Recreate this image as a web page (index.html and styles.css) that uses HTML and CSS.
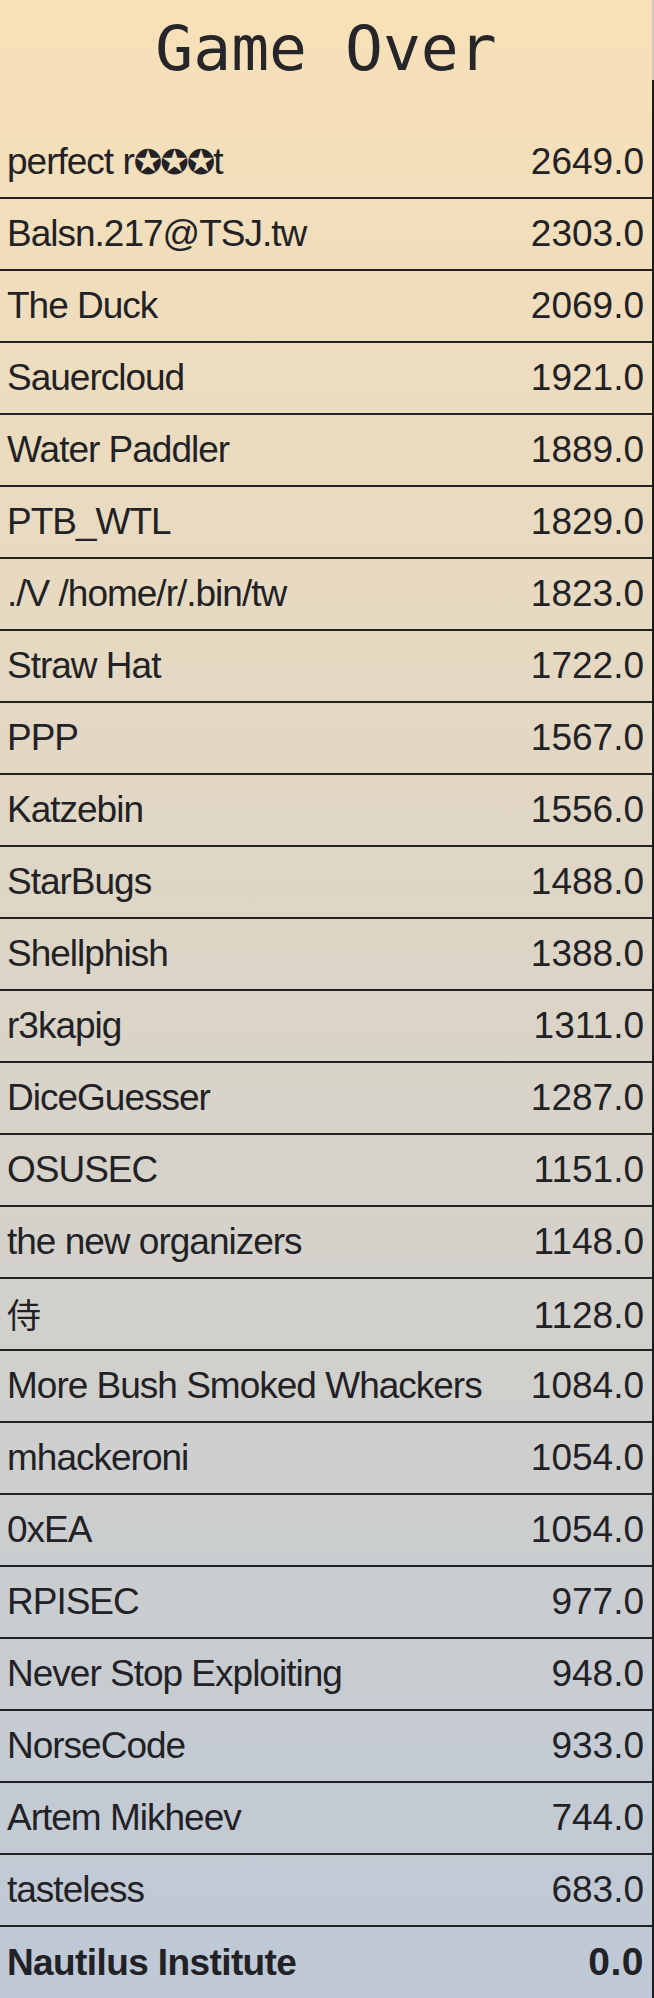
FILE: index.html
```html
<!DOCTYPE html>
<html lang="en">
<head>
<meta charset="utf-8">
<title>Game Over</title>
<link rel="stylesheet" href="styles.css">
</head>
<body>
<div class="board">
  <h1 class="title">Game Over</h1>
  <ol class="rows">
    <li class="row"><span class="name">perfect r<span class="star">✪✪✪</span>t</span><span class="score">2649.0</span></li>
    <li class="row"><span class="name">Balsn.217@TSJ.tw</span><span class="score">2303.0</span></li>
    <li class="row"><span class="name">The Duck</span><span class="score">2069.0</span></li>
    <li class="row"><span class="name">Sauercloud</span><span class="score">1921.0</span></li>
    <li class="row"><span class="name">Water Paddler</span><span class="score">1889.0</span></li>
    <li class="row"><span class="name">PTB_WTL</span><span class="score">1829.0</span></li>
    <li class="row"><span class="name">./V /home/r/.bin/tw</span><span class="score">1823.0</span></li>
    <li class="row"><span class="name">Straw Hat</span><span class="score">1722.0</span></li>
    <li class="row"><span class="name">PPP</span><span class="score">1567.0</span></li>
    <li class="row"><span class="name">Katzebin</span><span class="score">1556.0</span></li>
    <li class="row"><span class="name">StarBugs</span><span class="score">1488.0</span></li>
    <li class="row"><span class="name">Shellphish</span><span class="score">1388.0</span></li>
    <li class="row"><span class="name">r3kapig</span><span class="score">1311.0</span></li>
    <li class="row"><span class="name">DiceGuesser</span><span class="score">1287.0</span></li>
    <li class="row"><span class="name">OSUSEC</span><span class="score">1151.0</span></li>
    <li class="row"><span class="name">the new organizers</span><span class="score">1148.0</span></li>
    <li class="row"><span class="name cjk">侍</span><span class="score">1128.0</span></li>
    <li class="row"><span class="name">More Bush Smoked Whackers</span><span class="score">1084.0</span></li>
    <li class="row"><span class="name">mhackeroni</span><span class="score">1054.0</span></li>
    <li class="row"><span class="name">0xEA</span><span class="score">1054.0</span></li>
    <li class="row"><span class="name">RPISEC</span><span class="score">977.0</span></li>
    <li class="row"><span class="name">Never Stop Exploiting</span><span class="score">948.0</span></li>
    <li class="row"><span class="name">NorseCode</span><span class="score">933.0</span></li>
    <li class="row"><span class="name">Artem Mikheev</span><span class="score">744.0</span></li>
    <li class="row"><span class="name">tasteless</span><span class="score">683.0</span></li>
    <li class="row row-host"><span class="name">Nautilus Institute</span><span class="score">0.0</span></li>
  </ol>
</div>
</body>
</html>
```

FILE: styles.css
```css
html, body {
  margin: 0;
  padding: 0;
}
body {
  width: 654px;
  min-height: 1998px;
  background: linear-gradient(to bottom, #f8e1b8 0%, #bec8d6 100%);
  color: #222226;
  position: relative;
}
body::after {
  content: "";
  position: absolute;
  top: 80px;
  right: 0;
  width: 2px;
  bottom: 0;
  background: #1c1c1c;
}
body::before {
  content: "";
  position: absolute;
  top: 0;
  right: 0;
  width: 2px;
  height: 80px;
  background: #cfc9bd;
}
.board {
  width: 652px;
}
.title {
  margin: 0;
  height: 127px;
  box-sizing: border-box;
  padding-top: 17px;
  text-align: center;
  font-family: "DejaVu Sans Mono", monospace;
  font-weight: normal;
  font-size: 63px;
  line-height: 64px;
  color: #26262a;
}
.rows {
  list-style: none;
  margin: 0;
  padding: 0;
}
.row {
  display: flex;
  justify-content: space-between;
  align-items: baseline;
  height: 70px;
  line-height: 70px;
  padding: 0 8px 0 7px;
  border-bottom: 2px solid #222;
  font-family: "Liberation Sans", Arial, sans-serif;
  font-size: 37px;
  letter-spacing: -1px;
  white-space: nowrap;
}
.row:last-child {
  border-bottom: none;
}
.score {
  letter-spacing: 0;
}
.star {
  font-family: "DejaVu Sans", sans-serif;
  font-size: 34px;
  letter-spacing: -2px;
}
.cjk {
  font-family: "Noto Sans CJK SC", sans-serif;
  font-size: 34px;
}
.row-host {
  font-weight: bold;
  letter-spacing: -0.6px;
}
.row-host .score {
  font-size: 39px;
  letter-spacing: 0.5px;
}
```
